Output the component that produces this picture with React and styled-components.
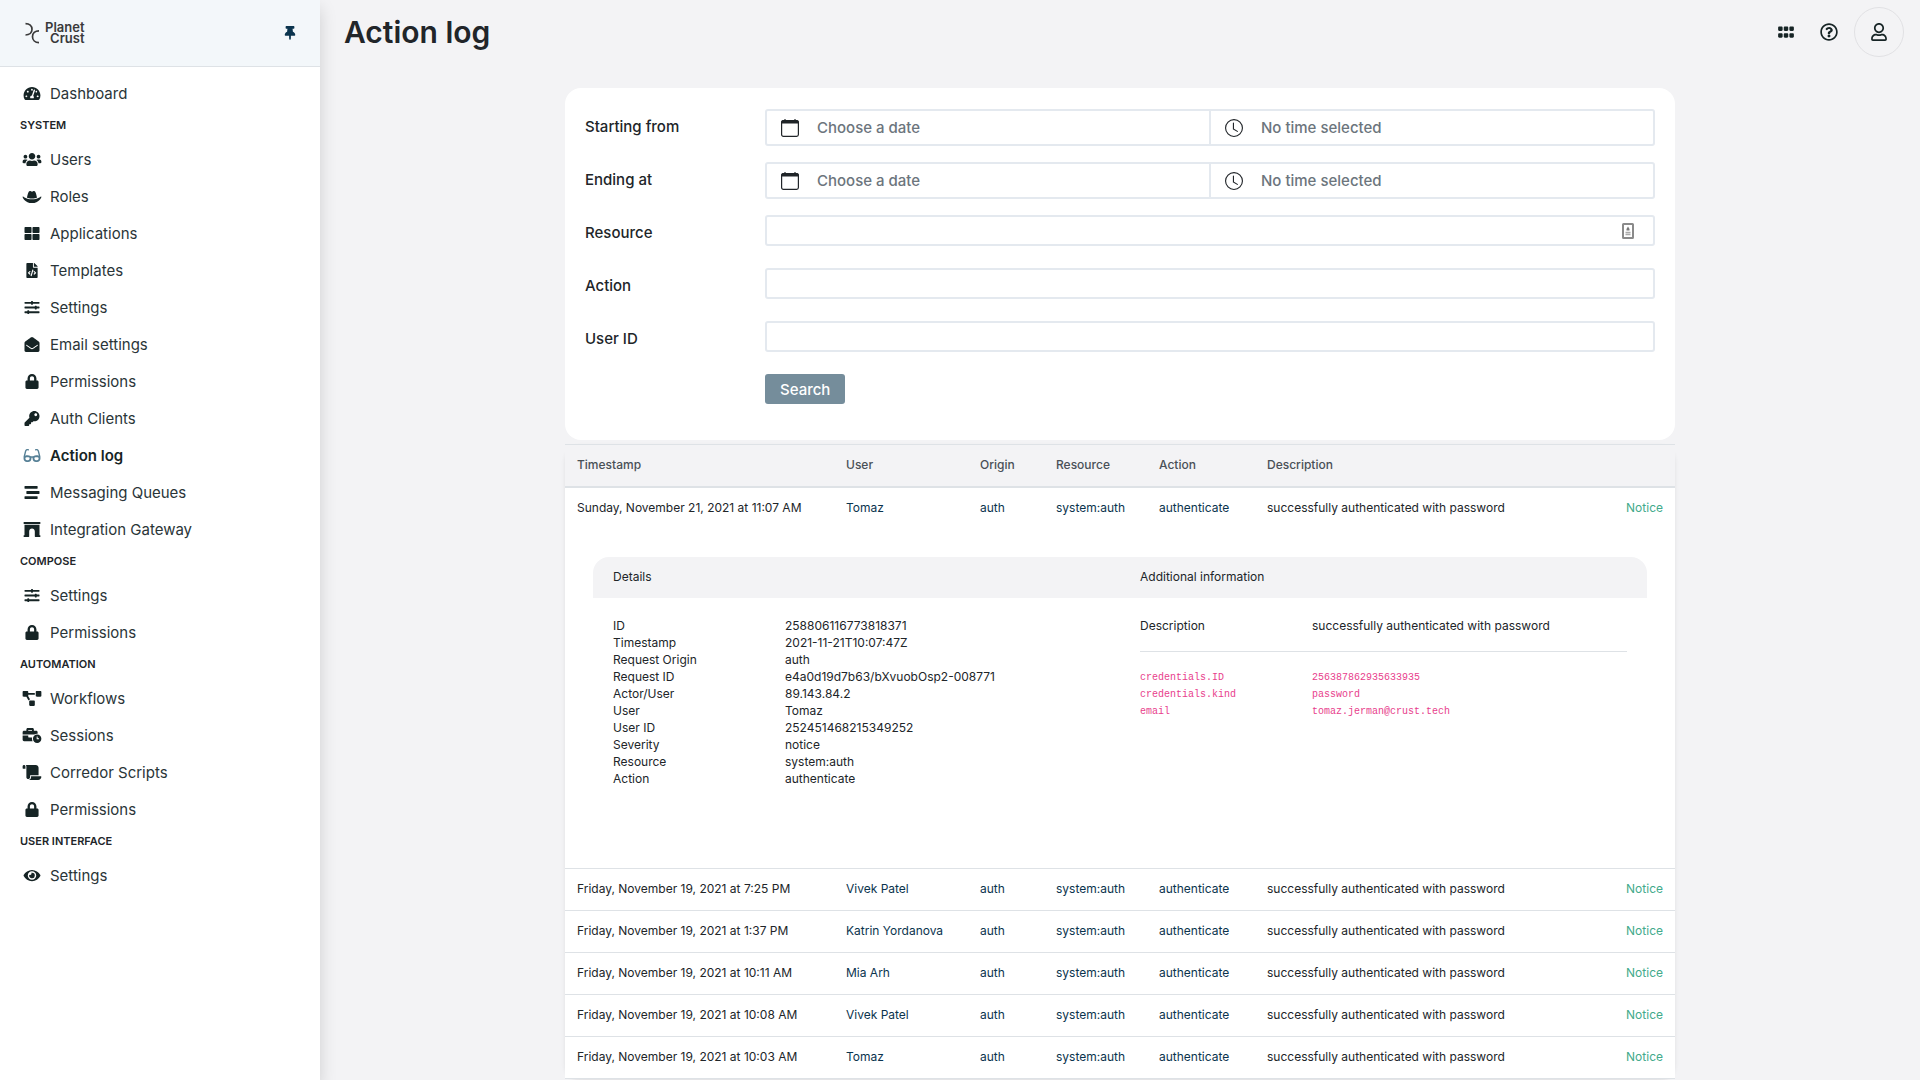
import React from "react";
import styled, { createGlobalStyle } from "styled-components";
import {
  FaArchway,
  FaBusinessTime,
  FaEnvelopeOpen,
  FaEye,
  FaFileCode,
  FaGlasses,
  FaGripHorizontal,
  FaHatCowboy,
  FaKey,
  FaLock,
  FaProjectDiagram,
  FaRegQuestionCircle,
  FaRegUser,
  FaScroll,
  FaSlidersH,
  FaStream,
  FaTachometerAlt,
  FaThLarge,
  FaThumbtack,
  FaUsers,
} from "react-icons/fa";
import { BsClock } from "react-icons/bs";

const color = {
  page: "#f3f3f5",
  ink: "#212529",
  icon: "#162425",
  primary: "#0b344e",
  muted: "#6c757d",
  line: "#dee2e6",
  field: "#e4e9ef",
  button: "#758d9b",
  notice: "#43aa8b",
  code: "#e83e8c",
};

const GlobalStyle = createGlobalStyle`
  *, *::before, *::after { box-sizing: border-box; }
  body {
    margin: 0;
    background: ${color.page};
    color: ${color.ink};
    font-family: Inter, "Liberation Sans", sans-serif;
    font-size: 15px;
    line-height: 21px;
  }
  button, input { font: inherit; color: inherit; }
`;

const Page = styled.div`
  display: flex;
  min-height: 100vh;
`;

const Sidebar = styled.aside`
  flex: 0 0 320px;
  background: #fff;
  box-shadow: 0 8px 16px rgba(0, 0, 0, 0.15);
`;

const SidebarHeader = styled.div`
  display: flex;
  align-items: center;
  justify-content: space-between;
  height: 67px;
  padding: 0 23px 0 24px;
  background: #f3f7fa;
  border-bottom: 1px solid ${color.line};
`;

const Brand = styled.a`
  display: flex;
  align-items: center;
  gap: 4px;
  color: #3a3a3a;
  text-decoration: none;
`;

const BrandName = styled.span`
  font-size: 13px;
  font-weight: 600;
  line-height: 11px;
  text-align: right;
`;

const IconButton = styled.button`
  display: flex;
  align-items: center;
  justify-content: center;
  width: ${(p) => p.$size}px;
  height: ${(p) => p.$size}px;
  padding: 0;
  border: ${(p) => (p.$outlined ? "1px solid #e1e1e4" : "0")};
  border-radius: 50%;
  background: none;
  color: ${(p) => p.$color || color.icon};
  cursor: pointer;

  svg {
    flex: none;
    width: ${(p) => p.$icon || 18}px;
    height: ${(p) => p.$icon || 18}px;
  }
`;

const Nav = styled.nav`
  padding: 8px 0;
`;

const NavHeading = styled.h2`
  margin: 0;
  padding: 3px 20px 5px;
  font-size: 11px;
  font-weight: 600;
  line-height: 21px;
`;

const NavList = styled.ul`
  margin: 0;
  padding: 0;
  list-style: none;
`;

const NavLink = styled.a`
  display: flex;
  align-items: center;
  gap: 8px;
  height: 37px;
  padding: 0 22px;
  color: ${(p) => (p.$active ? "#162425" : "#2a3538")};
  font-weight: ${(p) => (p.$active ? 600 : 400)};
  text-decoration: none;
`;

const NavIcon = styled.span`
  display: flex;
  flex: none;
  color: ${(p) => (p.$active ? "#568096" : color.icon)};

  svg {
    width: 20px;
    height: 15px;
  }
`;

const Main = styled.main`
  flex: 1;
  min-width: 0;
`;

const Topbar = styled.header`
  display: flex;
  align-items: center;
  justify-content: space-between;
  height: 64px;
  padding: 0 16px 0 24px;
`;

const Title = styled.h1`
  margin: 0;
  font-size: 30px;
  font-weight: 600;
  line-height: 36px;
`;

const Tools = styled.div`
  display: flex;
  align-items: center;
  gap: 7px;
`;

const Content = styled.div`
  max-width: 1110px;
  margin: 24px auto 0;
`;

const FilterCard = styled.form`
  display: flex;
  flex-direction: column;
  gap: 16px;
  padding: 21px 20px 36px;
  border-radius: 16px;
  background: #fff;
`;

const FormRow = styled.div`
  display: grid;
  grid-template-columns: 180px 1fr;
  align-items: start;
`;

const FormLabel = styled.label`
  padding: 7px 0 9px;
  font-weight: 500;
`;

const FieldBox = styled.div`
  display: flex;
  align-items: center;
  height: ${(p) => (p.$tall ? 37 : 31)}px;
  padding-right: ${(p) => (p.$icon ? 19 : 0)}px;
  border: 2px solid ${color.field};
  border-radius: 3px;
  background: #fff;
`;

const TextInput = styled.input`
  flex: 1;
  min-width: 0;
  height: 100%;
  padding: 0 12px;
  border: 0;
  outline: 0;
  background: none;
`;

const PickerButton = styled.button`
  display: flex;
  align-items: center;
  flex: 1;
  gap: 18px;
  height: 100%;
  padding: 0 14px;
  border: 0;
  background: none;
  color: ${color.muted};
  font-weight: 500;
  line-height: 21px;
  text-align: left;

  & + & {
    border-left: 2px solid ${color.field};
  }

  svg {
    flex: none;
    width: 18px;
    height: 18px;
    color: ${color.ink};
  }
`;

const SearchButton = styled.button`
  grid-column: 2;
  justify-self: start;
  height: 30px;
  padding: 0 15px;
  border: 0;
  border-radius: 3px;
  background: ${color.button};
  color: #fff;
  font-weight: 500;
`;

const LogPanel = styled.section`
  margin-top: 4px;
  border-radius: 16px;
  box-shadow: 0 2px 4px rgba(0, 0, 0, 0.08);
`;

const LogTable = styled.table`
  width: 100%;
  table-layout: fixed;
  border-collapse: separate;
  border-spacing: 0;
  border-bottom: 1px solid ${color.line};
  background: #fff;
  font-size: 12px;
  line-height: 17px;
`;

const Col = styled.col`
  width: ${(p) => (p.$width ? `${p.$width}px` : "auto")};
`;

const HeadCell = styled.th`
  height: 44px;
  padding: 0 12px 2px;
  border-top: 1px solid ${color.line};
  border-bottom: 2px solid ${color.line};
  background: ${color.page};
  color: #495057;
  font-weight: 500;
  text-align: left;
`;

const Cell = styled.td`
  height: ${(p) => (p.$first ? 41 : 42)}px;
  padding: 0 12px 2px;
  border-top: ${(p) => (p.$first ? "0" : `1px solid ${color.line}`)};
  color: ${(p) => p.$color || color.ink};
  text-align: ${(p) => p.$align || "left"};
  white-space: nowrap;
`;

const DetailsCell = styled.td`
  padding: 28px 28px 60px;
`;

const DetailsHeader = styled.div`
  display: grid;
  grid-template-columns: 1fr 1fr;
  border-radius: 16px 16px 0 0;
  background: ${color.page};
`;

const DetailsTitle = styled.h3`
  margin: 0;
  padding: 11px 20px 13px;
  font-size: 12px;
  font-weight: 400;
  line-height: 17px;
`;

const DetailsBody = styled.div`
  display: grid;
  grid-template-columns: 1fr 1fr;
`;

const DetailsPane = styled.div`
  padding: 19px 20px 21px;
`;

const Facts = styled.dl`
  display: grid;
  grid-template-columns: 172px 1fr;
  margin: 0;

  dd {
    margin: 0;
  }
`;

const Divider = styled.hr`
  height: 1px;
  margin: 17px 0;
  border: 0;
  background: ${color.line};
`;

const Code = styled.code`
  display: block;
  color: ${color.code};
  font-family: "Liberation Mono", monospace;
  font-size: 10px;
  line-height: 17px;
`;

const BrandMark = () => (
  <svg width="17" height="22" viewBox="0 0 17 22" fill="none" stroke="currentColor" strokeWidth="1.7" aria-hidden="true">
    <path d="M1.500 1.600C5.500 1.600 8 4 8 7.300s-2.500 5.700-6.500 5.700" />
    <path d="M15 8.800c-4 0-6.500 2.500-6.500 5.900s2.500 5.900 6.500 5.900" />
  </svg>
);

const CalendarIcon = () => (
  <svg viewBox="0 0 18 18" fill="none" stroke="currentColor" aria-hidden="true">
    <rect x="0.600" y="1.700" width="16.800" height="15.700" rx="1.800" strokeWidth="1.200" />
    <path d="M0.600 4V3c0-.8.500-1.300 1.300-1.300h14.200c.8 0 1.300.5 1.300 1.300v1z" fill="currentColor" strokeWidth="1" />
    <path d="M4 0v2M14 0v2" strokeWidth="1.200" />
  </svg>
);

const ContactCardIcon = () => (
  <svg width="12" height="16" viewBox="0 0 12 16" fill="none" aria-hidden="true">
    <rect x="1" y="1" width="10" height="14" rx="0.500" stroke="#8a8a8a" strokeWidth="2" />
    <path d="M6 3.500 7.500 6v1.500h-3V6z" fill="#777" />
    <path d="M3.500 9.500h5M3.500 11.500h5" stroke="#aaa" strokeWidth="1.400" />
  </svg>
);

const navSections = [
  { items: [["Dashboard", FaTachometerAlt]] },
  {
    heading: "SYSTEM",
    items: [
      ["Users", FaUsers],
      ["Roles", FaHatCowboy],
      ["Applications", FaThLarge],
      ["Templates", FaFileCode],
      ["Settings", FaSlidersH],
      ["Email settings", FaEnvelopeOpen],
      ["Permissions", FaLock],
      ["Auth Clients", FaKey],
      ["Action log", FaGlasses],
      ["Messaging Queues", FaStream],
      ["Integration Gateway", FaArchway],
    ],
  },
  {
    heading: "COMPOSE",
    items: [
      ["Settings", FaSlidersH],
      ["Permissions", FaLock],
    ],
  },
  {
    heading: "AUTOMATION",
    items: [
      ["Workflows", FaProjectDiagram],
      ["Sessions", FaBusinessTime],
      ["Corredor Scripts", FaScroll],
      ["Permissions", FaLock],
    ],
  },
  { heading: "USER INTERFACE", items: [["Settings", FaEye]] },
];

const dateRows = [
  { id: "from", label: "Starting from" },
  { id: "to", label: "Ending at" },
];

const textRows = [
  { id: "resource", label: "Resource", icon: true },
  { id: "action", label: "Action" },
  { id: "user-id", label: "User ID" },
];

const columns = [
  ["Timestamp", 269],
  ["User", 134],
  ["Origin", 76],
  ["Resource", 103],
  ["Action", 108],
  ["Description", 0],
  ["", 64],
];

const entries = [
  { time: "Sunday, November 21, 2021 at 11:07 AM", user: "Tomaz", open: true },
  { time: "Friday, November 19, 2021 at 7:25 PM", user: "Vivek Patel" },
  { time: "Friday, November 19, 2021 at 1:37 PM", user: "Katrin Yordanova" },
  { time: "Friday, November 19, 2021 at 10:11 AM", user: "Mia Arh" },
  { time: "Friday, November 19, 2021 at 10:08 AM", user: "Vivek Patel" },
  { time: "Friday, November 19, 2021 at 10:03 AM", user: "Tomaz" },
];

const details = [
  ["ID", "258806116773818371"],
  ["Timestamp", "2021-11-21T10:07:47Z"],
  ["Request Origin", "auth"],
  ["Request ID", "e4a0d19d7b63/bXvuobOsp2-008771"],
  ["Actor/User", "89.143.84.2"],
  ["User", "Tomaz"],
  ["User ID", "252451468215349252"],
  ["Severity", "notice"],
  ["Resource", "system:auth"],
  ["Action", "authenticate"],
];

const meta = [
  ["credentials.ID", "256387862935633935"],
  ["credentials.kind", "password"],
  ["email", "tomaz.jerman@crust.tech"],
];

const FactList = ({ facts, code }) => (
  <Facts>
    {facts.map(([name, value]) => (
      <React.Fragment key={name}>
        <dt>{code ? <Code>{name}</Code> : name}</dt>
        <dd>{code ? <Code>{value}</Code> : value}</dd>
      </React.Fragment>
    ))}
  </Facts>
);

const EntryRow = ({ entry, first }) => (
  <>
    <tr>
      <Cell $first={first}>{entry.time}</Cell>
      <Cell $first={first} $color={color.primary}>{entry.user}</Cell>
      <Cell $first={first} $color={color.primary}>auth</Cell>
      <Cell $first={first} $color={color.primary}>system:auth</Cell>
      <Cell $first={first} $color={color.primary}>authenticate</Cell>
      <Cell $first={first}>successfully authenticated with password</Cell>
      <Cell $first={first} $color={color.notice} $align="right">Notice</Cell>
    </tr>
    {entry.open && (
      <tr>
        <DetailsCell colSpan={columns.length}>
          <DetailsHeader>
            <DetailsTitle>Details</DetailsTitle>
            <DetailsTitle>Additional information</DetailsTitle>
          </DetailsHeader>
          <DetailsBody>
            <DetailsPane>
              <FactList facts={details} />
            </DetailsPane>
            <DetailsPane>
              <FactList facts={[["Description", "successfully authenticated with password"]]} />
              <Divider />
              <FactList facts={meta} code />
            </DetailsPane>
          </DetailsBody>
        </DetailsCell>
      </tr>
    )}
  </>
);

export default function App() {
  return (
    <Page>
      <GlobalStyle />
      <Sidebar>
        <SidebarHeader>
          <Brand href="#">
            <BrandMark />
            <BrandName>
              Planet
              <br />
              Crust
            </BrandName>
          </Brand>
          <IconButton type="button" $size={14} $icon={14} $color={color.primary} aria-label="Unpin sidebar">
            <FaThumbtack />
          </IconButton>
        </SidebarHeader>
        <Nav>
          {navSections.map(({ heading, items }) => (
            <React.Fragment key={heading || "top"}>
              {heading && <NavHeading>{heading}</NavHeading>}
              <NavList>
                {items.map(([label, Icon]) => {
                  const active = label === "Action log";
                  return (
                    <li key={label}>
                      <NavLink href="#" $active={active}>
                        <NavIcon $active={active}>
                          <Icon />
                        </NavIcon>
                        {label}
                      </NavLink>
                    </li>
                  );
                })}
              </NavList>
            </React.Fragment>
          ))}
        </Nav>
      </Sidebar>
      <Main>
        <Topbar>
          <Title>Action log</Title>
          <Tools>
            <IconButton type="button" $size={36} aria-label="Applications">
              <FaGripHorizontal />
            </IconButton>
            <IconButton type="button" $size={36} aria-label="Help">
              <FaRegQuestionCircle />
            </IconButton>
            <IconButton type="button" $size={50} $outlined aria-label="Profile">
              <FaRegUser />
            </IconButton>
          </Tools>
        </Topbar>
        <Content>
          <FilterCard>
            {dateRows.map(({ id, label }) => (
              <FormRow key={id}>
                <FormLabel htmlFor={`${id}-date`}>{label}</FormLabel>
                <FieldBox $tall>
                  <PickerButton type="button" id={`${id}-date`}>
                    <CalendarIcon />
                    Choose a date
                  </PickerButton>
                  <PickerButton type="button">
                    <BsClock />
                    No time selected
                  </PickerButton>
                </FieldBox>
              </FormRow>
            ))}
            {textRows.map(({ id, label, icon }) => (
              <FormRow key={id}>
                <FormLabel htmlFor={id}>{label}</FormLabel>
                <FieldBox $icon={icon}>
                  <TextInput id={id} type="text" />
                  {icon && <ContactCardIcon />}
                </FieldBox>
              </FormRow>
            ))}
            <FormRow>
              <SearchButton type="button">Search</SearchButton>
            </FormRow>
          </FilterCard>
          <LogPanel>
            <LogTable>
              <colgroup>
                {columns.map(([name, width]) => (
                  <Col key={name} $width={width} />
                ))}
              </colgroup>
              <thead>
                <tr>
                  {columns.map(([name]) => (
                    <HeadCell key={name} scope="col">{name}</HeadCell>
                  ))}
                </tr>
              </thead>
              <tbody>
                {entries.map((entry, index) => (
                  <EntryRow key={entry.time} entry={entry} first={index === 0} />
                ))}
              </tbody>
            </LogTable>
          </LogPanel>
        </Content>
      </Main>
    </Page>
  );
}
